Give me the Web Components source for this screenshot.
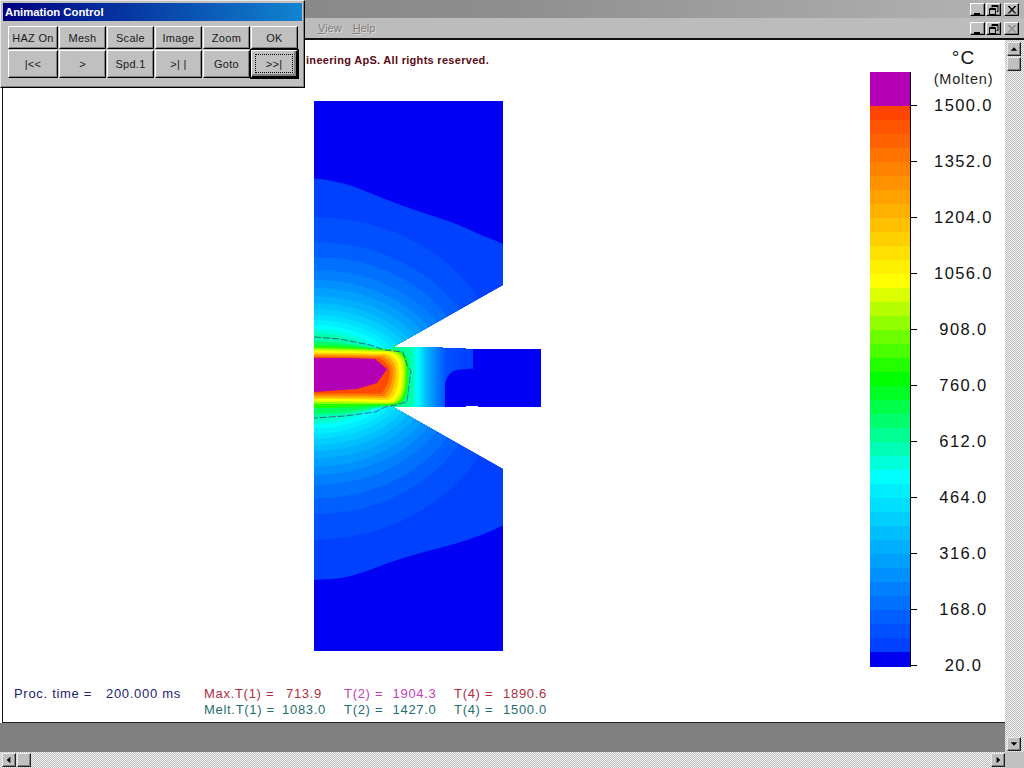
<!DOCTYPE html>
<html>
<head>
<meta charset="utf-8">
<title>Animation Control</title>
<style>
  html, body { margin: 0; padding: 0; width: 1024px; height: 768px; overflow: hidden; background: #c0c0c0; font-family: "Liberation Sans", Arial, sans-serif; }
</style>
</head>
<body>
<app-shell>
  <div slot="menu"><menu-item>View</menu-item><menu-item>Help</menu-item></div>
  <copy-line slot="client">ineering ApS. All rights reserved.</copy-line>
  <heat-plot slot="client"></heat-plot>
  <color-legend slot="legend"></color-legend>
  <read-outs slot="footer"></read-outs>
</app-shell>
<anim-palette></anim-palette>

<script>
const DITHER = 'repeating-conic-gradient(#bebebe 0 25%, #f0f0f0 0 50%) 0 0 / 2px 2px';

function bandColor(i) {
  let r = 0, g = 0, b = 0;
  if (i <= 12) { r = 255; g = 68 + 187 * i / 12; }
  else if (i <= 19) { r = 255 * (19 - i) / 7; g = 255; }
  else if (i <= 26) { g = 255; b = 255 * (i - 19) / 7; }
  else { g = 255 - 191 * (i - 26) / 12; b = 255; }
  return `rgb(${Math.round(r)},${Math.round(g)},${b === 0 ? 0 : Math.round(b)})`;
}

// smooth path through points, corners rounded at the midpoints
function smooth(pts) {
  let d = `M${pts[0][0]} ${pts[0][1]}`;
  for (let i = 1; i < pts.length - 1; i++) {
    const mx = (pts[i][0] + pts[i + 1][0]) / 2, my = (pts[i][1] + pts[i + 1][1]) / 2;
    d += `Q${pts[i][0]} ${pts[i][1]} ${mx} ${my}`;
  }
  const last = pts[pts.length - 1];
  return d + `L${last[0]} ${last[1]}Z`;
}

class WinButton extends HTMLElement {
  connectedCallback() {
    const glyphs = {
      min: '<path d="M3 9h6v2H3z" fill="#000"/>',
      restore: '<path d="M5 1.500h6v6H9.500M5 1.500v2M5 2.500h6" fill="none" stroke="#000"/><path d="M2.500 4.500h6v6h-6z" fill="none" stroke="#000"/><path d="M2 5.500h7" stroke="#000"/>',
      close: '<path d="M3 2l7 7.500M4 2l7 7.500M10 2l-7 7.500M11 2l-7 7.500" stroke="#000"/>',
      off: '<path d="M3 2l7 7.500M4 2l7 7.500M10 2l-7 7.500M11 2l-7 7.500" stroke="#8a8a8a"/>'
    };
    this.attachShadow({ mode: 'open' }).innerHTML = `
      <style>
        :host {
          display: block; box-sizing: border-box; width: 15px; height: 13px; background: #c0c0c0;
          border-top: 1px solid #fff; border-left: 1px solid #fff; border-right: 1px solid #000; border-bottom: 1px solid #000;
          box-shadow: inset -1px -1px 0 #808080;
        }
        svg { display: block; }
      </style>
      <svg width="13" height="11" viewBox="0 0 13 11">${glyphs[this.getAttribute('kind')]}</svg>`;
  }
}

class WinControls extends HTMLElement {
  connectedCallback() {
    const last = this.hasAttribute('disabled') ? 'off' : 'close';
    this.attachShadow({ mode: 'open' }).innerHTML = `
      <style>
        :host { display: flex; align-items: center; gap: 1px; margin-left: auto; margin-right: 5px; }
        .gap { margin-left: 2px; }
      </style>
      <win-button kind="min"></win-button>
      <win-button kind="restore"></win-button>
      <win-button kind="${last}" class="gap"></win-button>`;
  }
}

class MenuItem extends HTMLElement {
  connectedCallback() {
    const text = this.textContent;
    this.attachShadow({ mode: 'open' }).innerHTML = `
      <style>
        :host { display: inline-block; margin-right: 11px; font: 11px "Liberation Sans", Arial, sans-serif; color: #7d7d7d; text-shadow: 1px 1px 0 #dcdcdc; }
        u { text-decoration-thickness: 1px; }
      </style>
      <u>${text[0]}</u>${text.slice(1)}`;
  }
}

class ScrollButton extends HTMLElement {
  connectedCallback() {
    const arrows = {
      up: '<path d="M3 8h7L6.500 4z" fill="#000"/>',
      down: '<path d="M3 4h7L6.500 8z" fill="#000"/>',
      left: '<path d="M8 2.500v7L4 6z" fill="#000"/>',
      right: '<path d="M5 2.500v7L9 6z" fill="#000"/>',
      none: ''
    };
    this.attachShadow({ mode: 'open' }).innerHTML = `
      <style>
        :host {
          display: block; box-sizing: border-box; width: 14px; height: 14px; background: #c0c0c0; flex: none;
          border-top: 1px solid #e8e8e8; border-left: 1px solid #e8e8e8; border-right: 1px solid #222; border-bottom: 1px solid #222;
          box-shadow: inset -1px -1px 0 #808080;
        }
        svg { display: block; }
      </style>
      <svg width="12" height="12" viewBox="0 0 13 12">${arrows[this.getAttribute('dir') || 'none']}</svg>`;
  }
}

class VScroll extends HTMLElement {
  connectedCallback() {
    this.attachShadow({ mode: 'open' }).innerHTML = `
      <style>
        :host {
          display: flex; flex-direction: column; width: 19px; box-sizing: border-box; padding: 2px 3px 1px 2px;
          background: ${DITHER};
        }
        .thumb { margin-top: 1px; }
        .end { margin-top: auto; }
      </style>
      <scroll-button dir="up"></scroll-button>
      <scroll-button class="thumb"></scroll-button>
      <scroll-button dir="down" class="end"></scroll-button>`;
  }
}

class HScroll extends HTMLElement {
  connectedCallback() {
    this.attachShadow({ mode: 'open' }).innerHTML = `
      <style>
        :host { display: flex; height: 16px; background: #c0c0c0; }
        .track {
          flex: 1; display: flex; align-items: flex-start; box-sizing: border-box; padding: 1px 0 0 2px;
          background: ${DITHER};
        }
        .thumb { margin-left: 1px; }
        .end { margin-left: auto; }
        .corner { width: 19px; }
      </style>
      <div class="track">
        <scroll-button dir="left"></scroll-button>
        <scroll-button class="thumb"></scroll-button>
        <scroll-button dir="right" class="end"></scroll-button>
      </div>
      <div class="corner"></div>`;
  }
}

class AppShell extends HTMLElement {
  connectedCallback() {
    this.attachShadow({ mode: 'open' }).innerHTML = `
      <style>
        :host { display: flex; flex-direction: column; width: 1024px; height: 768px; }
        .title { height: 18px; display: flex; background: linear-gradient(90deg, #828282, #8e8e8e 50%, #b4b4b4); }
        .menu { height: 20px; display: flex; align-items: center; background: #bcbcbc; padding-left: 318px; box-sizing: border-box; }
        .menu ::slotted(div) { display: flex; }
        .rule { height: 2px; background: #111; }
        .middle { flex: 1; display: flex; min-height: 0; }
        .left { flex: 1; display: flex; flex-direction: column; min-width: 0; background: #fff; }
        .client { flex: 1; display: flex; flex-direction: column; margin-left: 2px; border-left: 1px solid #111; border-bottom: 1px solid #222; background: #fff; min-height: 0; }
        .upper { flex: 1; display: flex; min-height: 0; }
        .draw { width: 867px; flex: none; }
        .band { height: 29px; background: #808080; }
      </style>
      <div class="title"><win-controls></win-controls></div>
      <div class="menu"><slot name="menu"></slot><win-controls disabled></win-controls></div>
      <div class="rule"></div>
      <div class="middle">
        <div class="left">
          <div class="client">
            <div class="upper">
              <div class="draw"><slot name="client"></slot></div>
              <slot name="legend"></slot>
            </div>
            <slot name="footer"></slot>
          </div>
          <div class="band"></div>
        </div>
        <v-scroll></v-scroll>
      </div>
      <h-scroll></h-scroll>`;
  }
}

class CopyLine extends HTMLElement {
  connectedCallback() {
    this.attachShadow({ mode: 'open' }).innerHTML = `
      <style>
        :host {
          display: block; height: 61px; box-sizing: border-box; padding: 13px 0 0 303px;
          font: bold 11px/14px "Liberation Sans", Arial, sans-serif; letter-spacing: .3px; color: #5a0a14; white-space: nowrap;
        }
      </style>
      <slot></slot>`;
  }
}

class HeatPlot extends HTMLElement {
  connectedCallback() {
    const cx = 314, cy = 376;
    // outermost isotherm is irregular, the ones inside it are near enough elliptical
    const top = [[0, 198], [31, 193], [56, 183], [86, 171], [116, 161], [146, 151], [166, 141], [189, 133], [240, 100], [300, 0]];
    const bot = [[0, 204], [36, 202], [86, 182], [146, 167], [189, 151], [240, 120]];
    const first = [[300, 178]];
    top.forEach(p => first.push([cx + p[0], cy - p[1]]));
    bot.slice().reverse().forEach(p => first.push([cx + p[0], cy + p[1]]));
    first.push([300, 580]);
    let bands = `<path d="${smooth(first)}" fill="${bandColor(38)}"/>`;
    const levels = [217, 242, 257, 270, 280, 288, 296, 303, 309, 315, 320, 325, 329, 333, 336];
    levels.forEach((y, n) => {
      const r = cy - y, s = r / 198, a = r * (1.15 + 0.9 * (1 - s) * (1 - s)), rb = r * 1.03;
      bands += `<path d="M${cx - 20} ${cy - r}H${cx}A${a} ${r} 0 0 1 ${cx + a} ${cy}A${a} ${rb} 0 0 1 ${cx} ${cy + rb}H${cx - 20}Z" fill="${bandColor(37 - n)}"/>`;
    });

    // hot core, outside in: top at left, top mid, right, bottom mid, bottom at left
    const core = [
      ['#00ffa8', 337, 349, 411, 406, 418],
      ['#00ff60', 341, 349, 410, 406, 414],
      ['#20ff00', 345, 349.500, 408, 405, 408],
      ['#90ff00', 348, 350, 406, 404, 404],
      ['#d8ff00', 349.500, 351, 404, 403, 402],
      ['#ffff00', 351, 352, 402, 402, 400.500],
      ['#ffd400', 352.500, 353.500, 399, 400, 399],
      ['#ffa400', 354, 355, 396, 398, 397.500],
      ['#ff7800', 355.500, 356.500, 393, 396, 395.500],
      ['#ff4a00', 357, 358, 390, 393.500, 393.500]
    ];
    const layers = core.map(([c, t, tm, r, bm, b]) => {
      const pts = [[300, t], [314, t], [350, t + (tm - t) * 0.35], [380, tm], [r - 10, tm], [r - 1, tm + 8],
        [r, 372], [r - 1, bm - 12], [r - 8, bm], [382, bm], [350, b - (b - bm) * 0.2], [314, b], [300, b]];
      return `<path d="${smooth(pts)}" fill="${c}"/>`;
    }).join('');

    this.attachShadow({ mode: 'open' }).innerHTML = `
      <style>
        :host { display: block; padding-left: 311px; }
        svg { display: block; }
      </style>
      <svg width="230" height="551" viewBox="314 101 230 551">
        <defs>
          <clipPath id="plate"><path d="M314 101H503V285L393 347H443V348H466V349H541V407H478V406H466V407H393L503 469V651H314Z"/></clipPath>
          <linearGradient id="web" gradientUnits="userSpaceOnUse" x1="393" y1="0" x2="541" y2="0">
            <stop offset="0" stop-color="#00ff80"/>
            <stop offset=".13" stop-color="#00ffb0"/>
            <stop offset=".165" stop-color="#00ffff"/>
            <stop offset=".22" stop-color="#00c0ff"/>
            <stop offset=".29" stop-color="#0084ff"/>
            <stop offset=".36" stop-color="#0050ff"/>
            <stop offset=".5" stop-color="#0040ff"/>
            <stop offset=".54" stop-color="#0040ff"/>
            <stop offset=".55" stop-color="#0000ff"/>
          </linearGradient>
        </defs>
        <g clip-path="url(#plate)">
          <rect x="314" y="101" width="230" height="551" fill="#0000f4"/>
          ${bands}
          <rect x="393" y="345" width="150" height="64" fill="url(#web)"/>
          <path d="M445 408V386Q446 371 460 369.500L482 368L473 368V345H543V408Z" fill="#0000f4"/>
          ${layers}
          <path d="M314 358H350L375 359L387 369L377 383L357 389L314 392Z" fill="#b400b4"/>
          <path d="M314 337L340 339L370 345L385 350L403 352L407 365L411 371L409 386L407 402L395 405L385 407L375 412L345 416L314 418" fill="none" stroke="#2c6c94" stroke-width="1" stroke-dasharray="7 2"/>
        </g>
      </svg>`;
  }
}

class ColorLegend extends HTMLElement {
  connectedCallback() {
    const values = ['1500.0', '1352.0', '1204.0', '1056.0', '908.0', '760.0', '612.0', '464.0', '316.0', '168.0', '20.0'];
    let bands = '';
    for (let i = 0; i < 39; i++) bands += `<i style="background:${bandColor(i)}"></i>`;
    this.attachShadow({ mode: 'open' }).innerHTML = `
      <style>
        :host { display: flex; align-items: flex-start; font-family: "Liberation Sans", Arial, sans-serif; color: #111; }
        .bar { margin-top: 32px; width: 41px; border-right: 1px solid #000; box-sizing: border-box; display: flex; flex-direction: column; }
        .bar i { display: block; height: 14px; }
        .bar .molten { height: 34px; background: #b400b4; }
        .bar .cold { height: 15px; background: #0000f0; }
        .ticks { margin-top: 65px; width: 6px; height: 561px; background: repeating-linear-gradient(#000 0 1px, transparent 1px 56px); }
        .labels { width: 83px; margin-left: 5px; text-align: center; display: flex; flex-direction: column; }
        .unit { font-size: 19px; line-height: 20px; margin-top: 8px; letter-spacing: 1px; }
        .state { font-size: 14.500px; line-height: 18px; margin-top: 2px; letter-spacing: .8px; color: #222; margin-bottom: 7px; }
        .vals { display: flex; flex-direction: column; gap: 36px; }
        .vals div { font-size: 16.500px; line-height: 20px; letter-spacing: 1.400px; }
      </style>
      <div class="bar"><i class="molten"></i>${bands}<i class="cold"></i></div>
      <div class="ticks"></div>
      <div class="labels">
        <div class="unit">°C</div>
        <div class="state">(Molten)</div>
        <div class="vals">${values.map(v => `<div>${v}</div>`).join('')}</div>
      </div>`;
  }
}

class ReadOuts extends HTMLElement {
  connectedCallback() {
    this.attachShadow({ mode: 'open' }).innerHTML = `
      <style>
        :host {
          display: grid; height: 39px; box-sizing: border-box; padding: 3px 0 0 11px;
          grid-template-columns: 92px 98px 76px 48px 63px 47px 64px 46px; grid-auto-rows: 16px; align-items: center;
          font: 13px/16px "Liberation Sans", Arial, sans-serif; letter-spacing: .7px; white-space: nowrap;
        }
        .navy { color: #1c2470; } .red { color: #b02c40; } .mag { color: #c040b8; } .teal { color: #1f6f70; }
        .c { text-align: center; }
        .p { padding-left: 16px; }
      </style>
      <span class="navy">Proc. time =</span><span class="navy">200.000 ms</span>
      <span class="red">Max.T(1) =</span><span class="red c">713.9</span>
      <span class="mag p">T(2) =</span><span class="mag c">1904.3</span>
      <span class="red p">T(4) =</span><span class="red c">1890.6</span>
      <span></span><span></span>
      <span class="teal">Melt.T(1) =</span><span class="teal c">1083.0</span>
      <span class="teal p">T(2) =</span><span class="teal c">1427.0</span>
      <span class="teal p">T(4) =</span><span class="teal c">1500.0</span>`;
  }
}

class PalButton extends HTMLElement {
  connectedCallback() {
    const focus = this.hasAttribute('focus');
    this.attachShadow({ mode: 'open' }).innerHTML = `
      <style>
        :host {
          display: flex; align-items: center; justify-content: center; box-sizing: border-box; background: #c0c0c0;
          border-top: 1px solid #fff; border-left: 1px solid #fff; border-right: 1px solid #000; border-bottom: 1px solid #000;
          box-shadow: inset -1px -1px 0 #808080;
          font: 11px "Liberation Sans", Arial, sans-serif; letter-spacing: .3px; color: #1a1a1a; white-space: pre;
        }
        :host([focus]) { outline: 1px solid #000; outline-offset: 0; box-shadow: inset -2px -2px 0 #808080; border-right-width: 2px; border-bottom-width: 2px; }
        .dots { display: flex; align-items: center; justify-content: center; width: calc(100% - 6px); height: calc(100% - 6px); border: 1px dotted #000; box-sizing: border-box; }
      </style>
      ${focus ? '<div class="dots"><slot></slot></div>' : '<slot></slot>'}`;
  }
}

class AnimPalette extends HTMLElement {
  connectedCallback() {
    this.attachShadow({ mode: 'open' }).innerHTML = `
      <style>
        :host {
          position: absolute; left: 0; top: 0; width: 305px; height: 88px; box-sizing: border-box; padding: 2px;
          background: #c0c0c0; border-top: 1px solid #e8e8e8; border-left: 1px solid #e8e8e8;
          border-right: 1px solid #000; border-bottom: 1px solid #000; box-shadow: inset -1px -1px 0 #808080;
        }
        .cap {
          height: 18px; padding-left: 2px; display: flex; align-items: center; color: #fff;
          font: bold 11.300px "Liberation Sans", Arial, sans-serif;
          background: linear-gradient(90deg, #000080, #1084d0);
        }
        .grid {
          display: grid; margin: 5px 0 0 5px; gap: 1px;
          grid-template-columns: 50px repeat(5, 47px); grid-template-rows: 23px 28px;
        }
      </style>
      <div class="cap">Animation Control</div>
      <div class="grid">
        <pal-button>HAZ On</pal-button><pal-button>Mesh</pal-button><pal-button>Scale</pal-button>
        <pal-button>Image</pal-button><pal-button>Zoom</pal-button><pal-button>OK</pal-button>
        <pal-button>|&lt;&lt;</pal-button><pal-button>&gt;</pal-button><pal-button>Spd.1</pal-button>
        <pal-button>&gt;| |</pal-button><pal-button>Goto</pal-button><pal-button focus>&gt;&gt;|</pal-button>
      </div>`;
  }
}

customElements.define('win-button', WinButton);
customElements.define('win-controls', WinControls);
customElements.define('menu-item', MenuItem);
customElements.define('scroll-button', ScrollButton);
customElements.define('v-scroll', VScroll);
customElements.define('h-scroll', HScroll);
customElements.define('app-shell', AppShell);
customElements.define('copy-line', CopyLine);
customElements.define('heat-plot', HeatPlot);
customElements.define('color-legend', ColorLegend);
customElements.define('read-outs', ReadOuts);
customElements.define('pal-button', PalButton);
customElements.define('anim-palette', AnimPalette);
</script>
</body>
</html>
